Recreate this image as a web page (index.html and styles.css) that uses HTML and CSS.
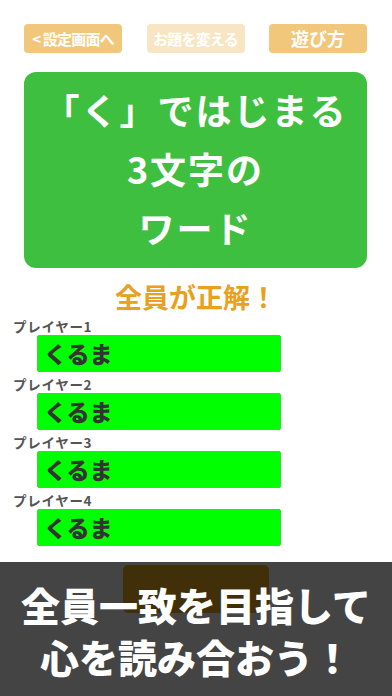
FILE: index.html
```html
<!DOCTYPE html>
<html lang="ja">
<head>
<meta charset="utf-8">
<link rel="stylesheet" href="styles.css">
</head>
<body>
<div class="page">
  <div class="topbar">
    <div class="tbtn">&lt;&nbsp;設定画面へ</div>
    <div class="tbtn faded">お題を変える</div>
    <div class="tbtn big">遊び方</div>
  </div>
  <div class="theme">
    <div>「く」ではじまる</div>
    <div>3文字の</div>
    <div>ワード</div>
  </div>
  <div class="result">全員が正解！</div>
  <div class="players">
    <div class="player">
      <div class="label">プレイヤー1</div>
      <div class="answer">くるま</div>
    </div>
    <div class="player">
      <div class="label">プレイヤー2</div>
      <div class="answer">くるま</div>
    </div>
    <div class="player">
      <div class="label">プレイヤー3</div>
      <div class="answer">くるま</div>
    </div>
    <div class="player">
      <div class="label">プレイヤー4</div>
      <div class="answer">くるま</div>
    </div>
  </div>
  <div class="nextwrap"><div class="next"></div></div>
  <div class="overlay">
    <div>全員一致を目指して</div>
    <div>心を読み合おう！</div>
  </div>
</div>
</body>
</html>
```
FILE: styles.css
```css
html, body {
  margin: 0;
  padding: 0;
  background: #ffffff;
}
.page {
  position: relative;
  width: 392px;
  height: 696px;
  overflow: hidden;
  font-family: "Noto Sans CJK JP", "Noto Sans", sans-serif;
  font-weight: 700;
}
.topbar {
  display: flex;
  justify-content: space-between;
  padding: 24px 25px 0 24px;
}
.tbtn {
  width: 98px;
  height: 29px;
  border-radius: 4px;
  background: #f0c77b;
  color: #ffffff;
  font-size: 15px;
  line-height: 29px;
  text-align: center;
  white-space: nowrap;
  letter-spacing: -0.8px;
}
.tbtn.faded {
  opacity: 0.45;
}
.tbtn.big {
  font-size: 18px;
  letter-spacing: 0;
}
.theme {
  margin: 19px 25px 0 24px;
  height: 196px;
  border-radius: 12px;
  background: #3fbf3f;
  color: #ffffff;
  font-size: 36px;
  letter-spacing: 2px;
  line-height: 59px;
  text-align: center;
  padding-top: 8px;
  box-sizing: border-box;
}
.result {
  margin-top: 12px;
  margin-bottom: 3px;
  text-align: center;
  color: #e8a020;
  font-size: 27px;
  line-height: 34px;
}
.players {
  display: flex;
  flex-direction: column;
  gap: 3px;
}
.player {
  display: flex;
  flex-direction: column;
}
.label {
  padding-left: 13px;
  font-size: 13.5px;
  letter-spacing: 0.7px;
  line-height: 18px;
  color: #555555;
}
.answer {
  margin-left: 37px;
  width: 244px;
  height: 37px;
  box-sizing: border-box;
  border: 1px solid #3ad83a;
  border-radius: 2px;
  background: #00ff00;
  color: #333333;
  font-size: 23px;
  font-weight: 900;
  line-height: 34px;
  padding-left: 6px;
}
.nextwrap {
  display: flex;
  justify-content: center;
  margin-top: 19px;
}
.next {
  width: 146px;
  height: 48px;
  border-radius: 5px;
  background: #f0b020;
}
.overlay {
  position: absolute;
  left: 0;
  right: 0;
  top: 562px;
  bottom: 0;
  background: rgba(0, 0, 0, 0.733);
  color: #ffffff;
  font-weight: 900;
  font-size: 39px;
  line-height: 52px;
  text-align: center;
  padding-top: 16px;
  box-sizing: border-box;
}
```
